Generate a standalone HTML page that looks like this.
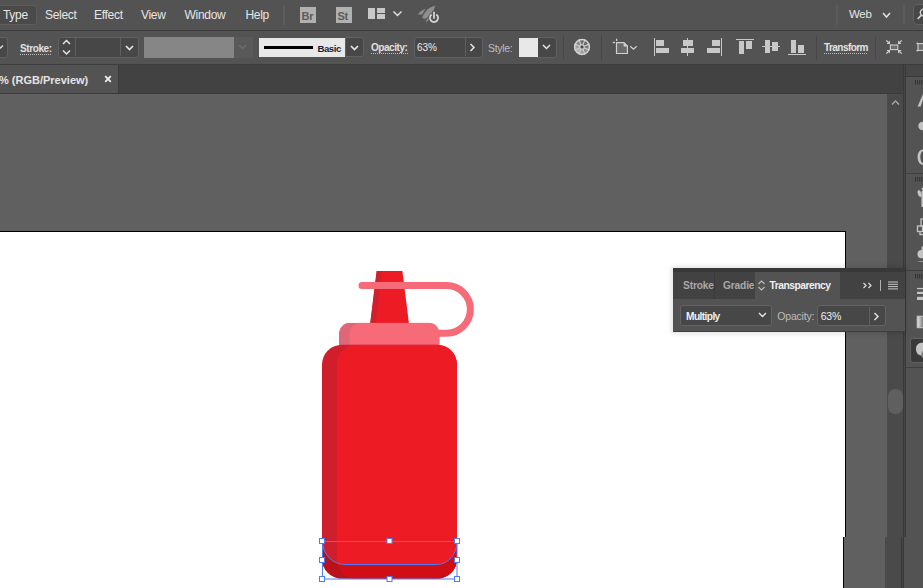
<!DOCTYPE html>
<html><head><meta charset="utf-8">
<style>
*{margin:0;padding:0;box-sizing:border-box}
html,body{width:923px;height:588px;overflow:hidden;background:#606060;font-family:"Liberation Sans",sans-serif}
.a{position:absolute}
.t{position:absolute;white-space:nowrap;line-height:1}
.menu{left:0;top:0;width:923px;height:30px;background:#535353}
.mt{color:#e6e6e6;font-size:12px;top:9px;letter-spacing:-0.3px}
.ctl{left:0;top:31px;width:923px;height:33px;background:#535353}
.hl{background:#3d3d3d}
.box{position:absolute;background:#474747;border:1px solid #616161;border-radius:3px}
.lbl{color:#e0e0e0;font-size:10.5px;font-weight:bold}
.ul{position:absolute;height:1px;background-image:linear-gradient(90deg,#bdbdbd 50%,transparent 50%);background-size:2px 1px}
.sep{position:absolute;width:1px;background:#474747}
.ig{position:absolute;background:#c8c8c8}
</style></head><body>
<!-- MENU BAR -->
<div class="a menu"></div>
<div class="box" style="left:-2px;top:5px;width:38.5px;height:19.5px;border-color:#5c5c5c;background:#4a4a4a"></div>
<div class="t mt" style="left:3px">Type</div>
<div class="t mt" style="left:45px">Select</div>
<div class="t mt" style="left:94px">Effect</div>
<div class="t mt" style="left:141px">View</div>
<div class="t mt" style="left:184.5px">Window</div>
<div class="t mt" style="left:245.5px">Help</div>
<div class="sep" style="left:283px;top:5px;height:20px;background:#5c5c5c;width:1.5px"></div>
<div class="a" style="left:300px;top:7px;width:16px;height:16px;background:#b1b1b1"></div>
<div class="t" style="left:301.5px;top:10.5px;font-size:11px;font-weight:bold;color:#5c5c5c;letter-spacing:-0.3px">Br</div>
<div class="a" style="left:336px;top:7px;width:16px;height:16px;background:#b1b1b1"></div>
<div class="t" style="left:337.5px;top:10.5px;font-size:11px;font-weight:bold;color:#5c5c5c;letter-spacing:-0.3px">St</div>
<div class="a" style="left:368px;top:8px;width:7px;height:11px;background:#c8c8c8"></div>
<div class="a" style="left:377px;top:8px;width:8px;height:4.5px;background:#c8c8c8"></div>
<div class="a" style="left:377px;top:14px;width:8px;height:5px;background:#c8c8c8"></div>
<svg class="a" style="left:392px;top:10px" width="11" height="8"><path d="M1.5 1.5 L5.5 5.5 L9.5 1.5" stroke="#e0e0e0" stroke-width="1.5" fill="none"/></svg>
<svg class="a" style="left:412px;top:2px" width="32" height="24">
 <g fill="#8e8e8e">
 <path d="M23 3.8 C18 4.8 13.2 8.5 10.2 15.4 L12.2 17 C16.8 15.6 21.8 11 23 3.8 Z"/>
 <path d="M5.8 12.6 C7.8 9.6 10.5 7.4 13.8 6.9 C12.2 8.6 11 10.4 10.3 12.4 Z"/>
 <path d="M14 21 C14 18.8 14.8 16.8 16.3 15.3 L18 17.3 C16.3 18.2 15 19.4 14 21 Z"/>
 </g>
 <circle cx="22" cy="16.1" r="5.9" fill="#535353"/>
 <path d="M19.7 12.6 A4.1 4.1 0 1 0 24.3 12.6" stroke="#d4d4d4" stroke-width="1.8" fill="none"/>
 <path d="M22 8.8 V17.5" stroke="#535353" stroke-width="3.4"/>
 <path d="M22 9.8 V16.8" stroke="#d4d4d4" stroke-width="1.8"/>
</svg>
<div class="sep" style="left:836.3px;top:5px;height:20px;background:#5c5c5c;width:1.5px"></div>
<div class="t mt" style="left:849px;top:9px;font-size:11.5px">Web</div>
<svg class="a" style="left:882px;top:12px" width="10" height="7"><path d="M1 1 L4.5 5 L8 1" stroke="#e0e0e0" stroke-width="1.5" fill="none"/></svg>
<div class="sep" style="left:903px;top:5px;height:20px;background:#5c5c5c;width:1.5px"></div>
<div class="box" style="left:913px;top:4px;width:20px;height:20.7px;background:#474747;border-color:#606060;border-radius:4px"></div>
<svg class="a" style="left:915px;top:8px" width="10" height="14"><circle cx="8.6" cy="4.6" r="3.3" stroke="#d0d0d0" stroke-width="1.4" fill="none"/><path d="M6.2 7.3 L2.6 11" stroke="#d0d0d0" stroke-width="1.7"/></svg>
<div class="a hl" style="left:0;top:30px;width:923px;height:1px"></div>


<!-- CONTROL BAR -->
<div class="a ctl"></div>
<div class="box" style="left:-5px;top:37px;width:13px;height:20.5px"></div>
<svg class="a" style="left:0;top:44px" width="6" height="6"><path d="M-2 1.5 L0.5 4 L3 1.5" stroke="#dcdcdc" stroke-width="1.4" fill="none"/></svg>
<div class="t lbl" style="left:20px;top:43.5px;font-size:10px;letter-spacing:-0.4px">Stroke:</div>
<div class="ul" style="left:20px;top:54px;width:32px"></div>
<div class="box" style="left:57.5px;top:37px;width:81px;height:20.5px"></div>
<div class="a" style="left:75px;top:38px;width:1px;height:18px;background:#5e5e5e"></div>
<div class="a" style="left:120px;top:38px;width:1px;height:18px;background:#5e5e5e"></div>
<svg class="a" style="left:61px;top:39px" width="11" height="17"><path d="M2 5 L5.5 1.5 L9 5 M2 11.5 L5.5 15 L9 11.5" stroke="#e6e6e6" stroke-width="1.5" fill="none"/></svg>
<svg class="a" style="left:124.5px;top:44.7px" width="10" height="7"><path d="M1 1 L4.5 4.5 L8 1" stroke="#e6e6e6" stroke-width="1.6" fill="none"/></svg>
<div class="a" style="left:144px;top:37px;width:90px;height:21px;background:#868686"></div>
<div class="a" style="left:234px;top:37px;width:19px;height:21px;background:#595959"></div>
<svg class="a" style="left:238px;top:44px" width="10" height="7"><path d="M1 1 L4.5 4.5 L8 1" stroke="#6c6c6c" stroke-width="1.5" fill="none"/></svg>
<div class="box" style="left:345px;top:37px;width:18.5px;height:20.3px;border-radius:0 3px 3px 0"></div>
<div class="a" style="left:259px;top:38px;width:86px;height:19px;background:#e8e8e8"></div>
<div class="a" style="left:264px;top:45.5px;width:49px;height:3.5px;background:#000"></div>
<div class="t" style="left:317.5px;top:43.8px;font-size:9.6px;font-weight:bold;color:#1c1c2e;letter-spacing:-0.45px">Basic</div>
<svg class="a" style="left:350px;top:45px" width="10" height="7"><path d="M1 1 L4.5 4.5 L8 1" stroke="#e6e6e6" stroke-width="1.7" fill="none"/></svg>
<div class="t lbl" style="left:371px;top:42.7px;font-size:10px;letter-spacing:-0.45px">Opacity:</div>
<div class="ul" style="left:371px;top:53px;width:37px"></div>
<div class="box" style="left:413.5px;top:37px;width:69px;height:20.5px"></div>
<div class="a" style="left:464.5px;top:38px;width:1px;height:18px;background:#5e5e5e"></div>
<div class="t" style="left:417px;top:43.3px;font-size:10px;color:#ececec;letter-spacing:-0.1px">63%</div>
<svg class="a" style="left:469px;top:43px" width="7" height="9"><path d="M1.5 1 L5 4.5 L1.5 8" stroke="#e6e6e6" stroke-width="1.5" fill="none"/></svg>
<div class="t" style="left:488px;top:43.5px;font-size:10.5px;color:#bcbcbc;letter-spacing:-0.3px;margin-top:-0.5px">Style:</div>
<div class="box" style="left:537px;top:37px;width:19.5px;height:20.5px;border-radius:0 3px 3px 0"></div>
<div class="a" style="left:519px;top:38px;width:19px;height:19px;background:#e8e8e8"></div>
<svg class="a" style="left:542px;top:44px" width="10" height="7"><path d="M1 1 L4.5 4.5 L8 1" stroke="#e6e6e6" stroke-width="1.5" fill="none"/></svg>
<div class="sep" style="left:563px;top:35px;height:25px"></div>
<svg class="a" style="left:573px;top:38px" width="18" height="18">
 <path d="M9 9 L6.24 2.35 A7.2 7.2 0 0 1 11.76 2.35 Z" fill="#6e6e6e"/><path d="M9 9 L11.76 2.35 A7.2 7.2 0 0 1 15.65 6.24 Z" fill="#656565"/><path d="M9 9 L15.65 6.24 A7.2 7.2 0 0 1 15.65 11.76 Z" fill="#7a7a7a"/><path d="M9 9 L15.65 11.76 A7.2 7.2 0 0 1 11.76 15.65 Z" fill="#8e8e8e"/><path d="M9 9 L11.76 15.65 A7.2 7.2 0 0 1 6.24 15.65 Z" fill="#9e9e9e"/><path d="M9 9 L6.24 15.65 A7.2 7.2 0 0 1 2.35 11.76 Z" fill="#b4b4b4"/><path d="M9 9 L2.35 11.76 A7.2 7.2 0 0 1 2.35 6.24 Z" fill="#a0a0a0"/><path d="M9 9 L2.35 6.24 A7.2 7.2 0 0 1 6.24 2.35 Z" fill="#8a8a8a"/>
 <path d="M9 9 L5.94 1.61 M9 9 L12.06 1.61 M9 9 L16.39 5.94 M9 9 L16.39 12.06 M9 9 L12.06 16.39 M9 9 L5.94 16.39 M9 9 L1.61 12.06 M9 9 L1.61 5.94 " stroke="#d2d2d2" stroke-width="1.1"/>
 <circle cx="9" cy="9" r="7.4" stroke="#d4d4d4" stroke-width="1.5" fill="none"/>
 <circle cx="9" cy="9" r="2.3" fill="#7a7a7a" stroke="#d2d2d2" stroke-width="1"/>
 <circle cx="9" cy="9" r="1" fill="#333"/>
</svg>
<div class="sep" style="left:601px;top:35px;height:25px"></div>
<svg class="a" style="left:608px;top:36px" width="34" height="22">
 <path d="M4.8 6.5 H6.9 M8.6 2.8 V5" stroke="#d0d0d0" stroke-width="1.3"/>
 <path d="M8.5 6.6 H16 L19.4 10 V17.5 H8.5 Z" fill="#6a6a6a" stroke="#d0d0d0" stroke-width="1.2"/>
 <path d="M15.6 6.2 L19.8 10.4 H15.6 Z" fill="#d0d0d0"/>
 <path d="M22.3 10.3 L25.5 13.3 L28.7 10.3" stroke="#d0d0d0" stroke-width="1.2" fill="none"/>
</svg>
<!-- align -->
<div class="ig" style="left:654px;top:38px;width:1.3px;height:18px"></div>
<div class="ig" style="left:656px;top:40px;width:8px;height:5.5px"></div>
<div class="ig" style="left:656px;top:47.5px;width:13px;height:5.5px"></div>
<div class="ig" style="left:687px;top:38px;width:1.3px;height:18px"></div>
<div class="ig" style="left:683px;top:40px;width:9.5px;height:5.5px"></div>
<div class="ig" style="left:681px;top:47.5px;width:13px;height:5.5px"></div>
<div class="ig" style="left:720.5px;top:38px;width:1.3px;height:18px"></div>
<div class="ig" style="left:712px;top:40px;width:8px;height:5.5px"></div>
<div class="ig" style="left:707px;top:47.5px;width:13px;height:5.5px"></div>
<div class="ig" style="left:736px;top:39px;width:18px;height:1.3px"></div>
<div class="ig" style="left:739px;top:41.3px;width:5.3px;height:12.7px"></div>
<div class="ig" style="left:746px;top:41.3px;width:5.7px;height:7.7px"></div>
<div class="ig" style="left:762px;top:46px;width:18px;height:1.3px"></div>
<div class="ig" style="left:765px;top:40px;width:5px;height:13px"></div>
<div class="ig" style="left:772px;top:42px;width:6px;height:9px"></div>
<div class="ig" style="left:788px;top:54px;width:18px;height:1.3px"></div>
<div class="ig" style="left:791px;top:40px;width:5.2px;height:12.8px"></div>
<div class="ig" style="left:798px;top:45.2px;width:6.2px;height:7.6px"></div>
<div class="sep" style="left:815.5px;top:35.5px;height:24px"></div>
<div class="t lbl" style="left:824px;top:42.8px;font-size:10px;letter-spacing:-0.55px;color:#e4e4e4">Transform</div>
<div class="ul" style="left:824px;top:53px;width:44px"></div>
<div class="sep" style="left:875px;top:35.5px;height:24px"></div>
<svg class="a" style="left:885px;top:39px" width="18" height="16">
 <rect x="5.4" y="6" width="7.4" height="4.6" fill="#6c6c6c" stroke="#cfcfcf" stroke-width="1.1"/>
 <g stroke="#cfcfcf" stroke-width="1.2" fill="none"><path d="M1.3 1.3 L3.5 3.5 M16.7 1.3 L14.5 3.5 M1.3 14.7 L3.5 12.5 M16.7 14.7 L14.5 12.5"/></g>
 <g fill="#cfcfcf"><path d="M5 5 V1.5 L1.5 5 Z M13 5 V1.5 L16.5 5 Z M5 11 V14.5 L1.5 11 Z M13 11 V14.5 L16.5 11 Z"/></g>
</svg>
<svg class="a" style="left:915px;top:40px" width="10" height="16">
 <rect x="3" y="3.6" width="10" height="6.8" fill="#6c6c6c" stroke="#cfcfcf" stroke-width="1.1"/>
 <circle cx="2.3" cy="3.4" r="0.9" fill="#cfcfcf"/><circle cx="2.3" cy="10.6" r="0.9" fill="#cfcfcf"/>
</svg>
<div class="a hl" style="left:0;top:64px;width:923px;height:1px"></div>

<!-- TAB BAR -->
<div class="a" style="left:0;top:65px;width:904px;height:28px;background:#424242"></div>
<div class="a" style="left:0;top:65px;width:118px;height:28px;background:#535353"></div>
<div class="a" style="left:118px;top:65px;width:1px;height:28px;background:#3c3c3c"></div>
<div class="t" style="left:-1px;top:74.7px;font-size:11px;font-weight:bold;color:#e4e4e4;letter-spacing:0px">% (RGB/Preview)</div>
<svg class="a" style="left:104px;top:75px" width="8" height="8"><path d="M1.2 1.2 L6.8 6.8 M6.8 1.2 L1.2 6.8" stroke="#f0f0f0" stroke-width="1.8"/></svg>
<div class="a" style="left:0;top:93px;width:904px;height:1px;background:#3a3a3a"></div>

<!-- CANVAS -->
<div class="a" style="left:0;top:94px;width:887px;height:494px;background:#606060"></div>
<div class="a" style="left:0;top:231px;width:846px;height:1px;background:#000"></div>
<div class="a" style="left:845px;top:231px;width:1px;height:306px;background:#000"></div>
<div class="a" style="left:0;top:232px;width:845px;height:356px;background:#fff"></div>
<!-- shifted lower strip -->
<div class="a" style="left:780px;top:537px;width:143px;height:51px;background:#606060"></div>
<div class="a" style="left:780px;top:537px;width:63px;height:51px;background:#fff"></div>
<div class="a" style="left:843px;top:537px;width:1px;height:51px;background:#000"></div>


<!-- BOTTLE -->
<svg class="a" style="left:0;top:0" width="923" height="588">
 <defs>
  <clipPath id="body"><rect x="322" y="344.7" width="135" height="233.8" rx="20" ry="20"/></clipPath>
  <clipPath id="cap"><rect x="339" y="322.7" width="100.5" height="40" rx="11" ry="11"/></clipPath>
  <clipPath id="noz"><path d="M376.6 271.1 H402.4 L408.9 322.9 H370.2 Z"/></clipPath>
  <clipPath id="cres"><path d="M322 541 C322 553.7 332.3 564.3 345 564.3 H436.5 C448.5 564.3 457.3 553.7 457.3 541 V590 H322 Z"/></clipPath>
 </defs>
 <g clip-path="url(#noz)">
  <rect x="360" y="270" width="60" height="54" fill="#ed1c24"/>
  <path d="M376.5 270.7 H382 L376 323 H370.2 Z" fill="#d0202d"/>
 </g>
 <path d="M362 285.4 H446.5 A23.9 23.9 0 0 1 446.5 333.2 H432" stroke="#f76a78" stroke-width="7" fill="none" stroke-linecap="round"/>
 <g clip-path="url(#cap)">
  <rect x="339" y="322.7" width="101" height="30" fill="#e0677a"/>
  <rect x="349.5" y="322.7" width="90" height="40" rx="11" ry="11" fill="#f76a78"/>
 </g>
 <g clip-path="url(#body)">
  <rect x="322" y="344" width="136" height="236" fill="#d01f2c"/>
  <rect x="336.8" y="344.7" width="140" height="234.3" rx="20" ry="20" fill="#ed1c24"/>
  <g clip-path="url(#cres)">
   <rect x="322" y="530" width="136" height="60" fill="#b9121b"/>
   <rect x="336.8" y="344.7" width="140" height="234.3" rx="20" ry="20" fill="#d10e14"/>
  </g>
 </g>
 <g stroke="#4d7df5" stroke-width="1" fill="none">
  <rect x="322.5" y="541.5" width="134.5" height="37.5"/>
  <path d="M322.5 541.5 C322.5 554 332.5 564.5 345 564.5 H436.5 C448.5 564.5 457 554 457 541.5"/>
 </g>
 <g fill="#fff" stroke="#4d7df5" stroke-width="1">
  <rect x="319.5" y="538.5" width="5" height="5"/><rect x="387" y="538.5" width="5" height="5"/><rect x="454.5" y="538.5" width="5" height="5"/>
  <rect x="319.5" y="557.5" width="5" height="5"/><rect x="454.5" y="557.5" width="5" height="5"/>
  <rect x="319.5" y="576.5" width="5" height="5"/><rect x="387" y="576.5" width="5" height="5"/><rect x="454.5" y="576.5" width="5" height="5"/>
 </g>
</svg>
<!-- SCROLLBAR -->
<div class="a" style="left:887px;top:94px;width:16px;height:443px;background:#4a4a4a"></div>
<div class="a" style="left:903px;top:65px;width:3px;height:472px;background:linear-gradient(90deg,#393939 0,#393939 1.2px,#454545 1.2px,#454545 2px,#393939 2px)"></div>
<svg class="a" style="left:891px;top:99px" width="10" height="7"><path d="M1 5.5 L4.5 2 L8 5.5" stroke="#a8a8a8" stroke-width="1.3" fill="none"/></svg>
<div class="a" style="left:888px;top:389px;width:15px;height:25px;background:#5f5f5f;border-radius:7px"></div>
<div class="a" style="left:885px;top:537px;width:16px;height:51px;background:#4a4a4a"></div>
<div class="a" style="left:901px;top:537px;width:3px;height:51px;background:linear-gradient(90deg,#393939 0,#393939 1.2px,#454545 1.2px,#454545 2px,#393939 2px)"></div>

<!-- RIGHT TOOLBAR -->
<div class="a" style="left:906px;top:65px;width:17px;height:523px;background:#535353"></div>
<div class="a" style="left:904px;top:537px;width:19px;height:51px;background:#535353"></div>


<!-- toolbar details -->
<div class="a" style="left:905.5px;top:65px;width:18px;height:11px;background:#474747"></div>
<div class="a" style="left:905.5px;top:76px;width:18px;height:1px;background:#3a3a3a"></div>
<div class="a" style="left:905.5px;top:173px;width:18px;height:1px;background:#3e3e3e"></div>
<div class="a" style="left:905.5px;top:270px;width:18px;height:1px;background:#3e3e3e"></div>
<div class="a" style="left:905.5px;top:367px;width:18px;height:1px;background:#3e3e3e"></div>
<svg class="a" style="left:913.5px;top:79.5px" width="9" height="6"><path d="M1.5 0 V4.5 M3.6 0 V4.5 M5.7 0 V4.5 M7.8 0 V4.5" stroke="#333" stroke-width="1"/></svg>
<svg class="a" style="left:913.5px;top:177px" width="9" height="6"><path d="M1.5 0 V4.5 M3.6 0 V4.5 M5.7 0 V4.5 M7.8 0 V4.5" stroke="#333" stroke-width="1"/></svg>
<svg class="a" style="left:913.5px;top:274px" width="9" height="6"><path d="M1.5 0 V4.5 M3.6 0 V4.5 M5.7 0 V4.5 M7.8 0 V4.5" stroke="#333" stroke-width="1"/></svg>
<svg class="a" style="left:905px;top:85px" width="18" height="285">
 <g fill="#c4c4c4" stroke="none">
  <path d="M18.4 8.2 L19.8 9 L15.6 21.6 L12.6 21.6 Z"/>
  <circle cx="17.5" cy="41" r="4.2"/>
  <path d="M19 64.5 C14.5 64.5 12.6 68 12.6 72 C12.6 76 14.5 80 19 80 V78.6 C16.5 78.2 15.3 75.5 15.3 72 C15.3 68.5 16.5 66 19 65.8 Z"/>
  <ellipse cx="14.6" cy="108.6" rx="1.7" ry="3.6" transform="rotate(-18 14.6 108.6)"/><path d="M16.4 107.5 C16.4 106 17 105.5 18 105.5 V122 H16.4 Z"/><circle cx="17.6" cy="103.8" r="1.1"/>
  <circle cx="16.6" cy="169.2" r="4.1"/><path d="M16.6 161.5 H18 V166 H16.6 Z"/>
  <path d="M13.5 176 H18 V177 H13.5 Z" opacity="0.55"/>
  <rect x="12" y="202.9" width="6" height="1.3"/>
  <rect x="12" y="206.8" width="6" height="2.2"/>
  <rect x="12" y="211.8" width="6" height="3.2"/>
 </g>
 <g stroke="#c4c4c4" stroke-width="1.3" fill="none">
  <rect x="16" y="134" width="4" height="7"/>
  <rect x="12.5" y="141" width="5" height="5.5"/>
  <path d="M15 146.5 V149.5 H18"/>
 </g>
 <defs><linearGradient id="gr" x1="0" x2="1"><stop offset="0" stop-color="#e8e8e8"/><stop offset="1" stop-color="#6a6a6a"/></linearGradient></defs>
 <rect x="12.2" y="231.2" width="7" height="11.5" fill="url(#gr)" stroke="#c4c4c4" stroke-width="1"/>
</svg>
<div class="a" style="left:910px;top:338px;width:20px;height:24.5px;background:#393939;border:1px solid #616161;border-radius:3px"></div>
<svg class="a" style="left:911px;top:339px" width="12" height="22"><path d="M12 3.5 C7 3.5 5 6.5 5 10 C5 13.5 7 16 10 16.5 L12 18.5 Z" fill="#c4c4c4"/><path d="M11 13 L12 12 V19 L10 17 Z" fill="#7a7a7a"/></svg>
<!-- TRANSPARENCY PANEL -->
<div class="a" style="left:671px;top:266px;width:236px;height:68px;background:rgba(0,0,0,0.10);filter:blur(2px)"></div>
<div class="a" style="left:673px;top:268px;width:232px;height:64px;background:#535353"></div>
<div class="a" style="left:673px;top:268px;width:232px;height:4px;background:#383838"></div>
<div class="a" style="left:673px;top:272px;width:82px;height:26.5px;background:#424242"></div>
<div class="a" style="left:714px;top:272px;width:1px;height:26.5px;background:#3a3a3a"></div>
<div class="a" style="left:839.5px;top:272px;width:65.5px;height:26.5px;background:#424242"></div>
<div class="t" style="left:683px;top:280.5px;font-size:10.2px;font-weight:bold;color:#a9a9a9;letter-spacing:-0.15px;width:31px;overflow:hidden">Stroke</div>
<div class="t" style="left:723px;top:280.5px;font-size:10.2px;font-weight:bold;color:#a9a9a9;letter-spacing:-0.15px;width:31px;overflow:hidden">Gradie</div>
<svg class="a" style="left:757px;top:280px" width="9" height="11"><path d="M1.5 4 L4.5 1 L7.5 4 M1.5 7 L4.5 10 L7.5 7" stroke="#c0c0c0" stroke-width="1.1" fill="none"/></svg>
<div class="t" style="left:769.5px;top:280.5px;font-size:10.3px;font-weight:bold;color:#f0f0f0;letter-spacing:-0.5px">Transparency</div>
<svg class="a" style="left:862px;top:282px" width="11" height="8"><path d="M1.5 1 L4 3.5 L1.5 6 M6.5 1 L9 3.5 L6.5 6" stroke="#dcdcdc" stroke-width="1.2" fill="none"/></svg>
<div class="a" style="left:880px;top:280px;width:1px;height:11px;background:#b0b0b0"></div>
<svg class="a" style="left:887px;top:281px" width="12" height="9"><path d="M1 1 H11 M1 3.3 H11 M1 5.6 H11 M1 7.9 H11" stroke="#c8c8c8" stroke-width="1"/></svg>
<div class="box" style="left:679.5px;top:305.3px;width:92px;height:20.3px;border-color:#636363"></div>
<div class="t" style="left:686px;top:311.5px;font-size:10.2px;font-weight:bold;color:#f0f0f0;letter-spacing:-0.6px">Multiply</div>
<svg class="a" style="left:758px;top:312px" width="10" height="7"><path d="M1 1 L4.5 4.5 L8 1" stroke="#e6e6e6" stroke-width="1.4" fill="none"/></svg>
<div class="t" style="left:777.3px;top:311.3px;font-size:10.5px;color:#bcbcbc;letter-spacing:-0.2px">Opacity:</div>
<div class="box" style="left:817.3px;top:305.3px;width:69px;height:20.3px;border-color:#636363"></div>
<div class="a" style="left:868.5px;top:306.5px;width:1px;height:18px;background:#5e5e5e"></div>
<div class="t" style="left:820.8px;top:311px;font-size:10.5px;color:#f0f0f0;letter-spacing:-0.3px">63%</div>
<svg class="a" style="left:873px;top:311.5px" width="7" height="9"><path d="M1.5 1 L5 4.5 L1.5 8" stroke="#e6e6e6" stroke-width="1.4" fill="none"/></svg>
<div class="a" style="left:673px;top:331px;width:232px;height:1px;background:#3e3e3e"></div>
</body></html>
